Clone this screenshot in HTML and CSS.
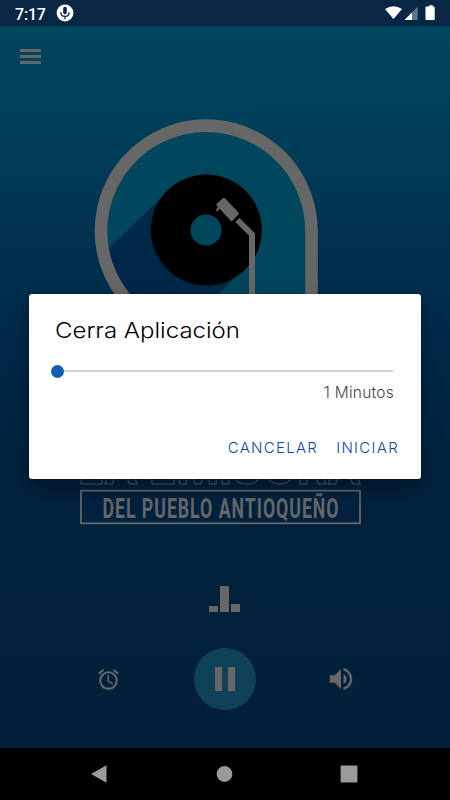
FILE: index.html
```html
<!DOCTYPE html>
<html lang="es">
<head>
<meta charset="utf-8">
<title>Radio</title>
<link rel="stylesheet" href="styles.css">
</head>
<body>
<div class="screen">
  <header class="status">
    <span class="clock">7:17</span>
    <svg class="mic" viewBox="0 0 18 18"><circle cx="9" cy="9" r="8.4" fill="#fff"/><rect x="7.2" y="2.8" width="3.6" height="7.6" rx="1.8" fill="#092744"/><path d="M4.8 8.2c0 5.6 8.4 5.6 8.4 0M9 12.5v2.800" fill="none" stroke="#092744" stroke-width="1.3"/></svg>
    <svg class="signals" viewBox="0 0 52 18"><path d="M1 5Q9.500-.5 18 5L9.500 15z" fill="#fff"/><path d="M20.500 16L33.700 2.700V16z" fill="#617589"/><path d="M20.500 16L28 8.500V16z" fill="#fff"/><path d="M42.500 2.500h2.700V1.300h3.500v1.200h1q1 0 1 1v11.500q0 1-1 1h-7.200q-1 0-1-1V3.500q0-1 1-1z" fill="#fff"/></svg>
  </header>
  <main class="player">
    <div class="toolbar"><div class="menu"><i></i><i></i><i></i></div></div>
    <svg class="logo" viewBox="80 110 290 420">
      <defs><clipPath id="inside"><path d="M101 230.500a105.500 105.500 0 0 1 211 0V340H206A105.500 105.500 0 0 1 101 230.500z"/></clipPath></defs>
      <path d="M101 230.500a105.500 105.500 0 0 1 211 0V340H206A105.500 105.500 0 0 1 101 230.500z" fill="#00465d"/>
      <path clip-path="url(#inside)" d="M165 194L96 261V340H174L240 272z" fill="#002748"/>
      <path d="M311.500 340V230.500a105.250 105.250 0 1 0-180 74.500" fill="none" stroke="#676767" stroke-width="12.600"/>
      <circle cx="206.300" cy="230" r="55.500"/>
      <circle cx="206" cy="230" r="15.500" fill="#00465d"/>
      <path d="M237.500 220L252 234.500V310" fill="none" stroke="#676767" stroke-width="6"/>
      <path d="M216.500 204L223 198q1-.8 2 .2L238.500 212.500q1 1 0 2L232.500 220.500q-1 1-2 0L219.500 208.500 217.500 211.500 215.800 210 218 207 216.200 205z" fill="#676767"/>
      <text class="outline" x="78" y="483.500" textLength="283" lengthAdjust="spacingAndGlyphs">LA EMISORA</text>
      <rect x="81" y="490.700" width="279" height="32.600" fill="none" stroke="#676767" stroke-width="1.800"/>
      <text class="tagline" x="102.500" y="517.500" textLength="237" lengthAdjust="spacingAndGlyphs">DEL PUEBLO ANTIOQUEÑO</text>
    </svg>
    <div class="equalizer"><i></i><i></i><i></i></div>
    <div class="controls">
      <svg class="small" viewBox="0 0 24 24"><path d="m22 5.720-4.600-3.860-1.290 1.530 4.600 3.860L22 5.720zM7.880 3.390 6.600 1.860 2 5.710l1.290 1.530 4.590-3.850zM12.500 8H11v6l4.750 2.850.75-1.230-4-2.370V8zM12 4a9 9 0 1 0 0 18 9 9 0 0 0 0-18zm0 16a7 7 0 1 1 0-14 7 7 0 0 1 0 14z"/></svg>
      <div class="pause"><i></i><i></i></div>
      <svg class="sound" viewBox="0 0 24 24"><path d="M3 9v6h4l5 5V4L7 9H3zm13.500 3A4.500 4.500 0 0 0 14 7.970v8.050A4.470 4.470 0 0 0 16.500 12zM14 3.230v2.060c2.890.86 5 3.540 5 6.710s-2.110 5.850-5 6.710v2.060c4.010-.91 7-4.490 7-8.770s-2.990-7.860-7-8.770z"/></svg>
    </div>
  </main>
  <nav class="navigation">
    <svg viewBox="0 0 18 18"><path d="M1 9L16.500.3v17.400z"/></svg>
    <svg viewBox="0 0 18 18"><circle cx="9.500" cy="9" r="7.900"/></svg>
    <svg viewBox="0 0 18 18"><rect x=".6" y=".6" width="16.800" height="16.800" rx="1"/></svg>
  </nav>
  <section class="dialog">
    <h1><svg viewBox="0 0 190 34"><text x="-1" y="24" textLength="185" lengthAdjust="spacingAndGlyphs">Cerra Aplicación</text></svg></h1>
    <div class="slider"><div class="thumb"></div></div>
    <p class="value">1 Minutos</p>
    <div class="actions"><span>CANCELAR</span><span>INICIAR</span></div>
  </section>
</div>
</body>
</html>
```
FILE: styles.css
```css
* { box-sizing: border-box; }
body { margin: 0; }
.screen {
  position: relative;
  width: 450px;
  height: 800px;
  overflow: hidden;
  display: flex;
  flex-direction: column;
  font-family: Inter, "Liberation Sans", sans-serif;
}
.status {
  height: 26px;
  background: #092744;
  display: flex;
  align-items: center;
  padding: 0 14px 0 15px;
}
.clock { font: 500 16px Roboto, sans-serif; letter-spacing: -.2px; color: #fff; width: 41px; padding-top: 2px; }
.mic { width: 18px; height: 18px; }
.signals { width: 52px; height: 18px; margin-left: auto; }
.player {
  height: 722px;
  background: linear-gradient(#00465d 0, #00415a 11%, #002d4d 35%, #00213e 62%, #001f38 100%);
}
.toolbar { height: 84px; padding: 23px 20px; }
.menu { width: 21px; display: flex; flex-direction: column; gap: 3px; }
.menu i { height: 3px; background: #676767; }
.logo { display: block; width: 290px; height: 420px; margin-left: 80px; }
.outline { font: bold 46px Inter, sans-serif; fill: none; stroke: #5b5f64; stroke-width: 1px; }
.tagline { font: bold 28.5px Roboto, sans-serif; letter-spacing: 1.6px; fill: #676767; }
.equalizer { height: 82px; display: flex; align-items: flex-end; gap: 2px; padding-left: 209px; }
.equalizer i { width: 9px; height: 6px; background: #676767; }
.equalizer i:nth-child(2) { height: 26px; }
.equalizer i:nth-child(3) { height: 8px; }
.controls {
  margin-top: 36px;
  height: 62px;
  display: flex;
  align-items: center;
  justify-content: space-between;
  padding: 0 96px 0 96px;
}
.small { width: 25px; height: 25px; fill: #676767; }
.sound { width: 30px; height: 30px; fill: #676767; margin-right: -2px; }
.pause {
  width: 62px;
  height: 62px;
  margin-left: 2px;
  border-radius: 50%;
  background: #0f4259;
  display: flex;
  align-items: center;
  justify-content: center;
  gap: 6px;
}
.pause i { width: 7px; height: 24px; background: #676767; }
.navigation {
  height: 52px;
  background: #000;
  display: flex;
  align-items: center;
  justify-content: space-between;
  padding: 0 92px 0 90px;
}
.navigation svg { width: 18px; height: 18px; fill: #9b9b9b; }
.dialog {
  position: absolute;
  left: 29px;
  top: 294px;
  width: 392px;
  height: 185px;
  padding: 20px 27px;
  background: #fff;
  border-radius: 3px;
  box-shadow: 0 0 1px #000, 0 8px 20px rgba(0, 0, 0, .35);
}
.dialog h1 { margin: 0; height: 34px; font-size: 22px; font-weight: 300; }
.dialog h1 svg { display: block; width: 190px; height: 34px; overflow: visible; }
.slider { height: 14px; margin-top: 16px; display: flex; align-items: center; width: 337px; background: linear-gradient(#d3d3d3, #d3d3d3) center / 100% 2px no-repeat; }
.thumb { width: 13px; height: 13px; border-radius: 50%; background: #1160b0; margin-left: -5px; }
.value { margin: 5px 0 0; text-align: right; font-size: 15.5px; line-height: 20px; font-weight: 300; color: #444; letter-spacing: .25px; }
.actions { margin-top: 35px; margin-right: -5px; display: flex; justify-content: flex-end; gap: 18px; font-size: 15px; line-height: 20px; font-weight: 300; color: #0b48a5; letter-spacing: 1.3px; }
```
